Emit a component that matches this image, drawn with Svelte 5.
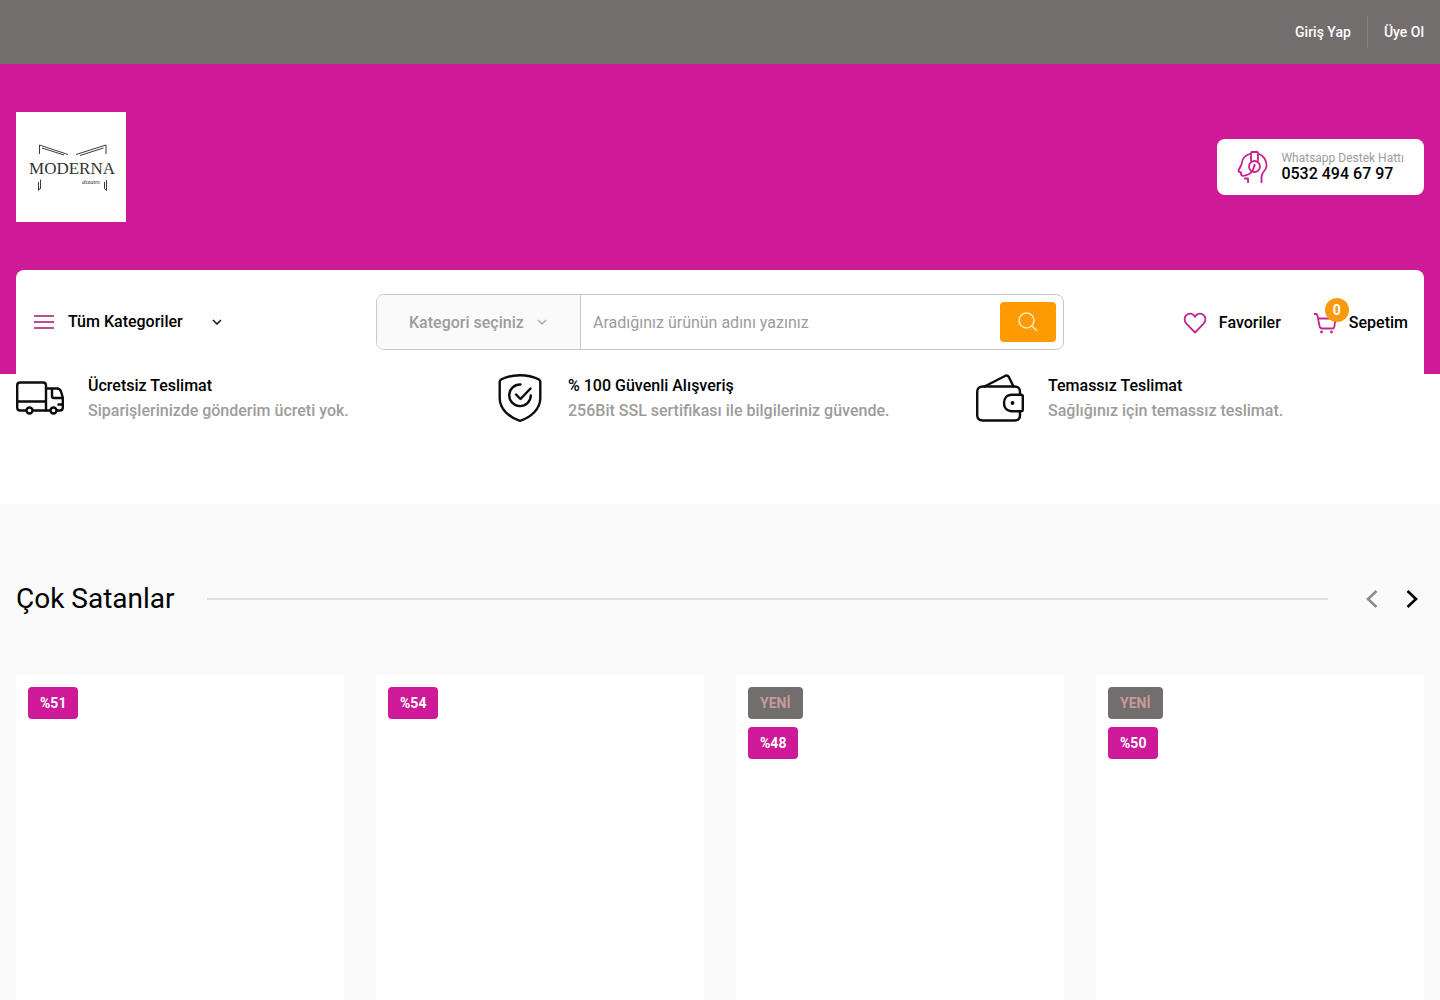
<script lang="ts">
  interface Product {
    isNew: boolean;
    discount: number;
  }

  const features = [
    { icon: 'truck', title: 'Ücretsiz Teslimat', text: 'Siparişlerinizde gönderim ücreti yok.' },
    { icon: 'shield', title: '% 100 Güvenli Alışveriş', text: '256Bit SSL sertifikası ile bilgileriniz güvende.' },
    { icon: 'wallet', title: 'Temassız Teslimat', text: 'Sağlığınız için temassız teslimat.' }
  ];

  const products: Product[] = [
    { isNew: false, discount: 51 },
    { isNew: false, discount: 54 },
    { isNew: true, discount: 48 },
    { isNew: true, discount: 50 }
  ];

  let query = $state('');
  let cartCount = $state(0);
</script>

<div class="page">
  <nav class="topbar">
    <a href="/uye-girisi">Giriş Yap</a>
    <span class="divider"></span>
    <a href="/uye-ol">Üye Ol</a>
  </nav>

  <header class="header">
    <div class="brand-row">
      <a class="logo" href="/" aria-label="Moderna Dizayn">
        <svg viewBox="0 0 110 110" width="110" height="110">
          <g fill="none" stroke="#3a3a3a">
            <path d="M23.500 42V33L52 42.500M26 36L48 43" />
            <path d="M90 42V33L60 42.500M87.500 36L64 43.500" />
            <path d="M24.500 67.500V77M22.500 70V78.500L24.500 76" />
            <path d="M90.500 68V78.500L88.500 76.500V70" />
          </g>
          <text class="logo-name" x="56" y="62" text-anchor="middle">MODERNA</text>
          <text class="logo-sub" x="66" y="72">dızaʏn</text>
        </svg>
      </a>

      <a class="support" href="tel:05324946797">
        <svg viewBox="0 0 32 32" width="32" height="32" fill="none" stroke="#c9218f" stroke-width="1.800" stroke-linejoin="round">
          <path d="M14 2.500C8 4 5 8 4.500 13.500L1.500 19.500Q1.200 21 4 21.500V23.500Q5 25.500 8 24.500C13 24 16.500 20 17 15" />
          <path d="M21 2.500C27 4.500 30 10 29.500 15.500C29 20 24.500 21 24.500 26V32" />
          <path d="M14 10.500V2Q14 1 15 1H20Q21 1 21 2V10.500" />
          <circle cx="17.500" cy="15.500" r="5.500" />
          <path d="M17.500 13V16M7 27.500H11V32" />
        </svg>
        <span class="support-text">
          <span class="support-label">Whatsapp Destek Hattı</span>
          <span class="support-phone">0532 494 67 97</span>
        </span>
      </a>
    </div>

    <div class="navbar">
      <button class="categories" type="button">
        <svg viewBox="0 0 24 24" width="24" height="24" stroke="#b8508f" stroke-width="2">
          <path d="M2 6H22M2 12H22M2 18H22" />
        </svg>
        Tüm Kategoriler
        <svg class="chevron" viewBox="0 0 12 12" width="12" height="12" fill="none" stroke="#111" stroke-width="1.500">
          <path d="M2 4L6 8L10 4" />
        </svg>
      </button>

      <form class="search" role="search">
        <div class="search-category">
          <select aria-label="Kategori">
            <option>Kategori seçiniz</option>
          </select>
          <svg viewBox="0 0 12 12" width="12" height="12" fill="none" stroke="#aaa" stroke-width="1.500">
            <path d="M2 4L6 8L10 4" />
          </svg>
        </div>
        <input type="search" aria-label="Ürün ara" placeholder="Aradığınız ürünün adını yazınız" bind:value={query} />
        <button type="button" aria-label="Ara">
          <svg viewBox="0 0 24 24" width="24" height="24" fill="none" stroke="#ffe8b8" stroke-width="1.600">
            <circle cx="10.500" cy="10.500" r="7.500" />
            <path d="M16 16L21 21" />
          </svg>
        </button>
      </form>

      <div class="user-links">
        <a href="/favoriler">
          <svg viewBox="0 0 24 24" width="24" height="24" fill="none" stroke="#c0288f" stroke-width="1.800" stroke-linejoin="round">
            <path d="M12 21.500L3.600 12.800C0.600 9.500 1.200 5.300 4.200 3.500C7 1.900 10.600 2.800 12 6C13.400 2.800 17 1.900 19.800 3.500C22.800 5.300 23.400 9.500 20.400 12.800Z" />
          </svg>
          Favoriler
        </a>
        <a class="cart" href="/sepet">
          <svg viewBox="0 0 24 24" width="24" height="24" fill="none" stroke="#c0288f" stroke-width="1.800" stroke-linejoin="round">
            <path d="M1 3H3Q4 3 4.300 4L6.500 15Q7 17.500 9 17.500H19.500Q21 17.500 21.300 16L22.500 7.500H5" />
            <circle cx="8.500" cy="21" r="1.400" fill="#c0288f" stroke="none" />
            <circle cx="18.500" cy="21" r="1.400" fill="#c0288f" stroke="none" />
          </svg>
          <span class="cart-count">{cartCount}</span>
          Sepetim
        </a>
      </div>
    </div>
  </header>

  <section class="features">
    {#each features as feature}
      <div class="feature">
        <svg viewBox="0 0 48 48" width="48" height="48" fill="none" stroke="#0c0c0c" stroke-width="2.400" stroke-linecap="round" stroke-linejoin="round">
          {#if feature.icon === 'truck'}
            <path d="M9.500 36.500H4Q1.200 36.500 1.200 33.500V11.500Q1.200 8.500 4 8.500H27Q30 8.500 30 11.500V36.500H17.500M1.200 27.500H30" />
            <path d="M30 14.500H41Q44 14.500 45 17.500L46.800 23.500V33.500Q46.800 36.500 44 36.500H41.500M30 36.500H33.500M46.800 24H38Q36 24 36 22V15M46 30.500H42.500" />
            <circle cx="13.500" cy="36.500" r="3" />
            <circle cx="37.500" cy="36.500" r="3" />
          {:else if feature.icon === 'shield'}
            <path d="M24 1.200C31 1.200 38 3 43 5.500Q44.300 6.200 44.300 8V24C44.300 35 35 43.500 24 46.800C13 43.500 3.700 35 3.700 24V8Q3.700 6.200 5 5.500C10 3 17 1.200 24 1.200Z" />
            <path d="M24.500 10.500A10.800 10.800 0 1 0 34.800 21.500M20 20.500L24.500 25L34.500 14.500" />
          {:else}
            <path d="M44 20.500V18Q44 12.500 38.500 12.500H7Q1.200 12.500 1.200 18V41Q1.200 46.500 7 46.500H38.500Q44 46.500 44 41V37.500" />
            <path d="M8.500 12.500L29.500 1.700Q31.500 0.800 32.700 2.800L37.500 12.500" />
            <path d="M46.800 22.500Q46.800 20.800 45 20.800H36C30.500 20.800 28 24.500 28 29C28 33.500 30.500 37.200 36 37.200H45Q46.800 37.200 46.800 35.500Z" />
            <circle cx="36.500" cy="29" r="1.900" fill="#0c0c0c" stroke="none" />
          {/if}
        </svg>
        <div>
          <h3>{feature.title}</h3>
          <p>{feature.text}</p>
        </div>
      </div>
    {/each}
  </section>

  <section class="bestsellers">
    <div class="section-head">
      <h2>Çok Satanlar</h2>
      <span class="rule"></span>
      <div class="arrows">
        <button class="prev" type="button" aria-label="Önceki">
          <svg viewBox="0 0 24 24" width="24" height="24" fill="none" stroke="currentColor" stroke-width="2.600">
            <path d="M16.500 4L8 12L16.500 20" />
          </svg>
        </button>
        <button type="button" aria-label="Sonraki">
          <svg viewBox="0 0 24 24" width="24" height="24" fill="none" stroke="currentColor" stroke-width="2.600">
            <path d="M7.500 4L16 12L7.500 20" />
          </svg>
        </button>
      </div>
    </div>

    <div class="products">
      {#each products as product}
        <article class="product">
          {#if product.isNew}
            <span class="tag new">YENİ</span>
          {/if}
          <span class="tag">%{product.discount}</span>
        </article>
      {/each}
    </div>
  </section>
</div>

<style>
  :global(body) {
    margin: 0;
    background: #fff;
  }

  .page {
    --primary: #ce1998;
    --secondary: #726e6d;
    --muted: #9c9c9c;
    display: flex;
    flex-direction: column;
    min-height: 100vh;
    font-family: Roboto, sans-serif;
    font-size: 16px;
    font-weight: 500;
    line-height: 24px;
    color: #000;
  }

  .page * {
    box-sizing: border-box;
  }

  a {
    color: inherit;
    text-decoration: none;
  }

  button,
  input,
  select {
    margin: 0;
    padding: 0;
    border: 0;
    background: none;
    color: inherit;
    font: inherit;
  }

  button {
    cursor: pointer;
  }

  svg {
    display: block;
    flex: none;
  }

  h2,
  h3,
  p {
    margin: 0;
  }

  .topbar {
    display: flex;
    align-items: center;
    justify-content: flex-end;
    gap: 16px;
    padding: 16px;
    background: var(--secondary);
    color: #fff;
    font-size: 14px;
  }

  .divider {
    width: 1px;
    height: 32px;
    background: #858180;
  }

  .header {
    padding: 48px 16px 0;
    background: var(--primary);
  }

  .brand-row {
    display: flex;
    align-items: center;
    justify-content: space-between;
    margin-bottom: 48px;
  }

  .logo {
    background: #fff;
  }

  .logo-name {
    font-family: "Liberation Serif", serif;
    font-size: 17px;
    font-weight: 400;
    fill: #333;
  }

  .logo-sub {
    font-family: "Liberation Serif", serif;
    font-size: 7px;
    font-style: italic;
    font-weight: 400;
    fill: #333;
  }

  .support {
    display: flex;
    align-items: center;
    gap: 12px;
    height: 56px;
    padding: 0 20px;
    border-radius: 8px;
    background: #fff;
  }

  .support-text {
    display: flex;
    flex-direction: column;
    padding-bottom: 3px;
    line-height: 16px;
  }

  .support-label {
    color: var(--muted);
    font-size: 12px;
    font-weight: 400;
  }

  .navbar {
    display: grid;
    grid-template-columns: repeat(4, 1fr);
    gap: 32px;
    align-items: center;
    padding: 24px 0;
    border-radius: 8px 8px 0 0;
    background: #fff;
    line-height: 26px;
  }

  .categories {
    display: flex;
    align-items: center;
    justify-self: start;
    gap: 12px;
    height: 26px;
    padding-left: 16px;
  }

  .chevron {
    margin-left: 16px;
  }

  .search {
    grid-column: span 2;
    display: flex;
    align-items: center;
    height: 56px;
    padding-right: 7px;
    border: 1px solid #c8c8c8;
    border-radius: 8px;
    overflow: hidden;
  }

  .search-category {
    position: relative;
    width: 204px;
    height: 100%;
    border-right: 1px solid #c8c8c8;
    background: #fafafa;
    color: var(--muted);
  }

  .search-category select {
    width: 100%;
    height: 100%;
    padding: 2px 0 0 32px;
    appearance: none;
  }

  .search-category svg {
    position: absolute;
    top: 21px;
    right: 32px;
    pointer-events: none;
  }

  .search input {
    flex: 1;
    min-width: 0;
    height: 100%;
    padding: 0 12px;
    font-weight: 400;
    outline: none;
  }

  .search input::placeholder {
    color: var(--muted);
    opacity: 1;
  }

  .search button {
    display: grid;
    place-items: center;
    width: 56px;
    height: 40px;
    border-radius: 4px;
    background: #fe9b02;
  }

  .user-links {
    display: flex;
    justify-content: flex-end;
    gap: 32px;
    padding: 2px 16px 0 0;
  }

  .user-links a {
    display: flex;
    align-items: center;
    gap: 12px;
  }

  .cart {
    position: relative;
  }

  .cart-count {
    position: absolute;
    top: -12px;
    left: 12px;
    width: 24px;
    height: 24px;
    border-radius: 50%;
    background: #f99a0e;
    color: #fff;
    font-size: 14px;
    font-weight: 700;
    line-height: 24px;
    text-align: center;
  }

  .features {
    display: grid;
    grid-template-columns: repeat(3, 1fr);
    gap: 32px;
    padding: 0 16px 80px;
  }

  .feature {
    display: flex;
    gap: 24px;
  }

  .feature h3 {
    font-size: 16px;
    font-weight: 500;
  }

  .feature p {
    color: var(--muted);
    line-height: 26px;
  }

  .bestsellers {
    flex: 1;
    display: flex;
    flex-direction: column;
    padding: 80px 16px 0;
    background: #fafafa;
  }

  .section-head {
    display: flex;
    align-items: center;
    gap: 32px;
    margin-bottom: 61px;
  }

  .section-head h2 {
    font-size: 28px;
    font-weight: 400;
    line-height: 30px;
  }

  .rule {
    flex: 1;
    height: 2px;
    background: #dedede;
  }

  .arrows {
    display: flex;
    gap: 16px;
  }

  .prev {
    color: #8c8c8c;
  }

  .products {
    flex: 1;
    display: grid;
    grid-template-columns: repeat(4, 1fr);
    gap: 32px;
  }

  .product {
    display: flex;
    flex-direction: column;
    align-items: flex-start;
    gap: 8px;
    min-height: 320px;
    padding: 12px;
    background: #fff;
  }

  .tag {
    padding: 4px 12px;
    border-radius: 4px;
    background: var(--primary);
    color: #fff;
    font-size: 14px;
    font-weight: 700;
  }

  .tag.new {
    background: var(--secondary);
    color: #c79a9c;
  }
</style>
